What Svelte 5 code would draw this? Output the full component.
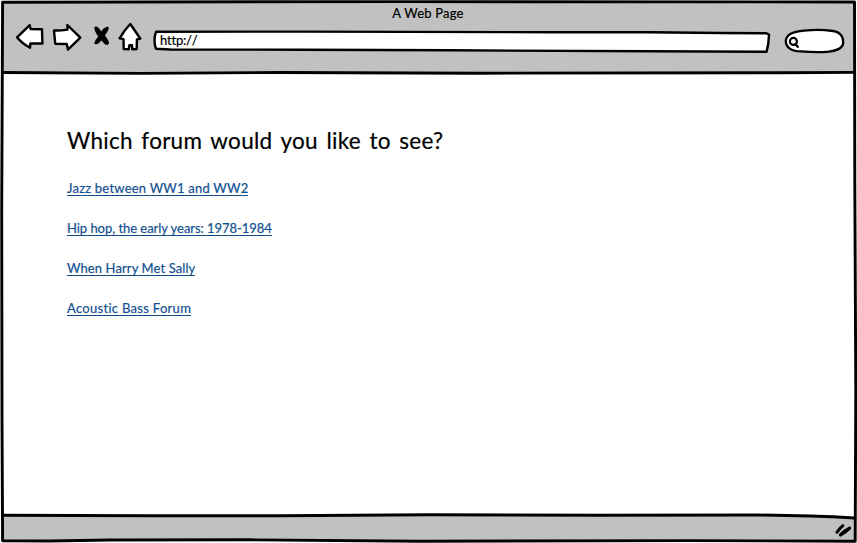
<script>
  const links = [
    { text: 'Jazz between WW1 and WW2', spacing: 0.22 },
    { text: 'Hip hop, the early years: 1978-1984', spacing: -0.04 },
    { text: 'When Harry Met Sally', spacing: 0.1 },
    { text: 'Acoustic Bass Forum', spacing: 0.3 }
  ];
</script>

<div class="window">
  <header>
    <div class="title">A Web Page</div>
    <div class="toolbar">
      <svg class="nav" width="130" height="32" viewBox="14 21 130 32" aria-hidden="true">
        <g fill="#fff" stroke="#000" stroke-width="2.4" stroke-linejoin="round">
          <path d="M17 37.3 L29.7 25.2 L30.6 29 L42 29.2 L42.4 43.5 L30.4 43.5 L30 47.8 Q22 43.5 17 37.3Z" />
          <path d="M54 30.5 Q60 30.8 67.5 29.6 L67.4 25 L80.3 37.7 L68 49.6 L66.8 44 L55.2 43.7Z" />
          <path d="M130.3 24 L140.3 38.7 L136.9 39.5 L136.7 49 L132.4 49.3 L132 45.3 L129.4 45.3 L128.8 49.2 L123.7 49 L123.5 39.2 L119.6 38.3 Q124 30.5 130.3 24Z" />
        </g>
        <path d="M94.5 27 Q97.5 25 101.2 31.5 Q103.5 27.5 108 26.6 Q110.5 28.2 104.9 35.5 Q111.2 43.2 107.8 44.8 Q105 45.5 101.4 40.2 Q97.5 45.7 94.4 43.8 Q94 41.6 98.2 36.4 Q93.4 29.7 94.5 27Z" />
      </svg>
      <div class="address">
        <svg width="620" height="26" viewBox="152 28 620 26" aria-hidden="true">
          <path d="M156 31.8 L300 31.6 L560 32.2 L650 32.3 L720 33 L766 33.2 L769 34.5 Q768.8 44 766.6 51.7 L650 51.3 L450 50.3 L300 49.7 L170 49.5 L156 48.8 Q153 40 156 31.8Z" fill="#fff" stroke="#000" stroke-width="2.4" stroke-linejoin="round" />
        </svg>
        <span>http://</span>
      </div>
      <svg class="search" width="64" height="28" viewBox="783 27 64 28" aria-hidden="true">
        <path d="M785.7 41 C786.5 34.5 792 31.7 804 30.6 Q819 29 833 31 C842 32.2 843.5 39 843.2 43 C842.5 49 836 51 827 51.8 Q816 52.7 801 51.4 Q786.5 51.2 785.7 41Z" fill="#fff" stroke="#000" stroke-width="2.3" />
        <circle cx="793.4" cy="41.4" r="3.5" fill="none" stroke="#000" stroke-width="2.2" />
        <path d="M795.4 44.2 L797.8 46.8" stroke="#000" stroke-width="2.4" stroke-linecap="round" />
      </svg>
    </div>
  </header>

  <main>
    <h1>Which forum would you like to see?</h1>
    <ul>
      {#each links as link}
        <li><a href="#top" style="letter-spacing: {link.spacing}px">{link.text}</a></li>
      {/each}
    </ul>
  </main>

  <footer></footer>

  <svg class="frame" width="857" height="543" viewBox="0 0 857 543" aria-hidden="true">
    <path d="M0 0H857V543H0Z M2.5 2 V541 H855.5 V2Z" fill="#fff" fill-rule="evenodd" />
    <path d="M760 515 L855 517.8 V512 H760Z" fill="#fff" />
    <g fill="none" stroke="#000" stroke-width="2.9" stroke-linejoin="round">
      <path d="M2.6 2.2 L400 1.6 L854.5 2 L854.8 180 L855.8 390 L855.2 541.2 L690 540.6 L420 541.2 L250 539.8 L110 540 L50 541 L2.6 540.7 L2 420 L1.7 210 Z" />
      <path d="M2.5 72.5 L140 73.4 L280 72.5 L480 73.2 L780 72.8 L854 72.4" />
      <path d="M2.5 515.2 L150 515.8 L280 515.7 L430 514.8 L600 515.2 L757 515 Q810 515.5 854.5 518" />
    </g>
    <g fill="none" stroke="#000" stroke-width="3" stroke-linecap="round">
      <path d="M837 532.3 Q840 527.5 842.8 525.7" />
      <path d="M840.4 535 Q844 530.5 849.6 528" />
      <path d="M841 534.6 Q846 532 849.4 528.4" />
    </g>
  </svg>
</div>

<style>
  .window {
    position: relative;
    width: 857px;
    height: 543px;
    display: flex;
    flex-direction: column;
    overflow: hidden;
    background: #fff;
    color: #000;
    font-family: Lato, "Liberation Sans", sans-serif;
    -webkit-text-stroke: 0.2px currentColor;
  }

  header {
    height: 73px;
    flex: none;
    background: #c1c1c1;
  }

  .title {
    height: 21px;
    line-height: 27px;
    text-align: center;
    font-size: 13px;
    letter-spacing: 0.2px;
    margin-right: 1px;
  }

  .toolbar {
    display: flex;
    align-items: center;
    height: 40px;
    padding-left: 14px;
  }

  .toolbar svg {
    display: block;
    flex: none;
  }

  .nav {
    margin-bottom: 8px;
  }

  .address {
    display: grid;
    align-items: center;
    margin-left: 8px;
  }

  .address > * {
    grid-area: 1 / 1;
  }

  .address span {
    padding-left: 8px;
    font-size: 13px;
    line-height: 18px;
    letter-spacing: -0.2px;
    font-kerning: none;
    margin-bottom: 2px;
  }

  .search {
    margin-left: 10.5px;
  }

  main {
    flex: 1;
    padding: 52px 67px 0;
  }

  h1 {
    margin: 0;
    height: 43px;
    line-height: 32px;
    font-size: 22.5px;
    font-weight: 400;
    letter-spacing: 0.26px;
    word-spacing: 2.6px;
    white-space: nowrap;
  }

  ul {
    margin: 0;
    padding: 0;
    list-style: none;
  }

  li {
    height: 40px;
    font-size: 13px;
    line-height: 16px;
    padding-top: 12px;
    box-sizing: border-box;
  }

  a {
    display: inline-block;
    height: 15px;
    border-bottom: 1px solid #11508f;
    color: #11508f;
    text-decoration: none;
    white-space: nowrap;
  }

  footer {
    height: 27px;
    flex: none;
    background: #c1c1c1;
  }

  .frame {
    position: absolute;
    inset: 0;
    pointer-events: none;
  }
</style>
